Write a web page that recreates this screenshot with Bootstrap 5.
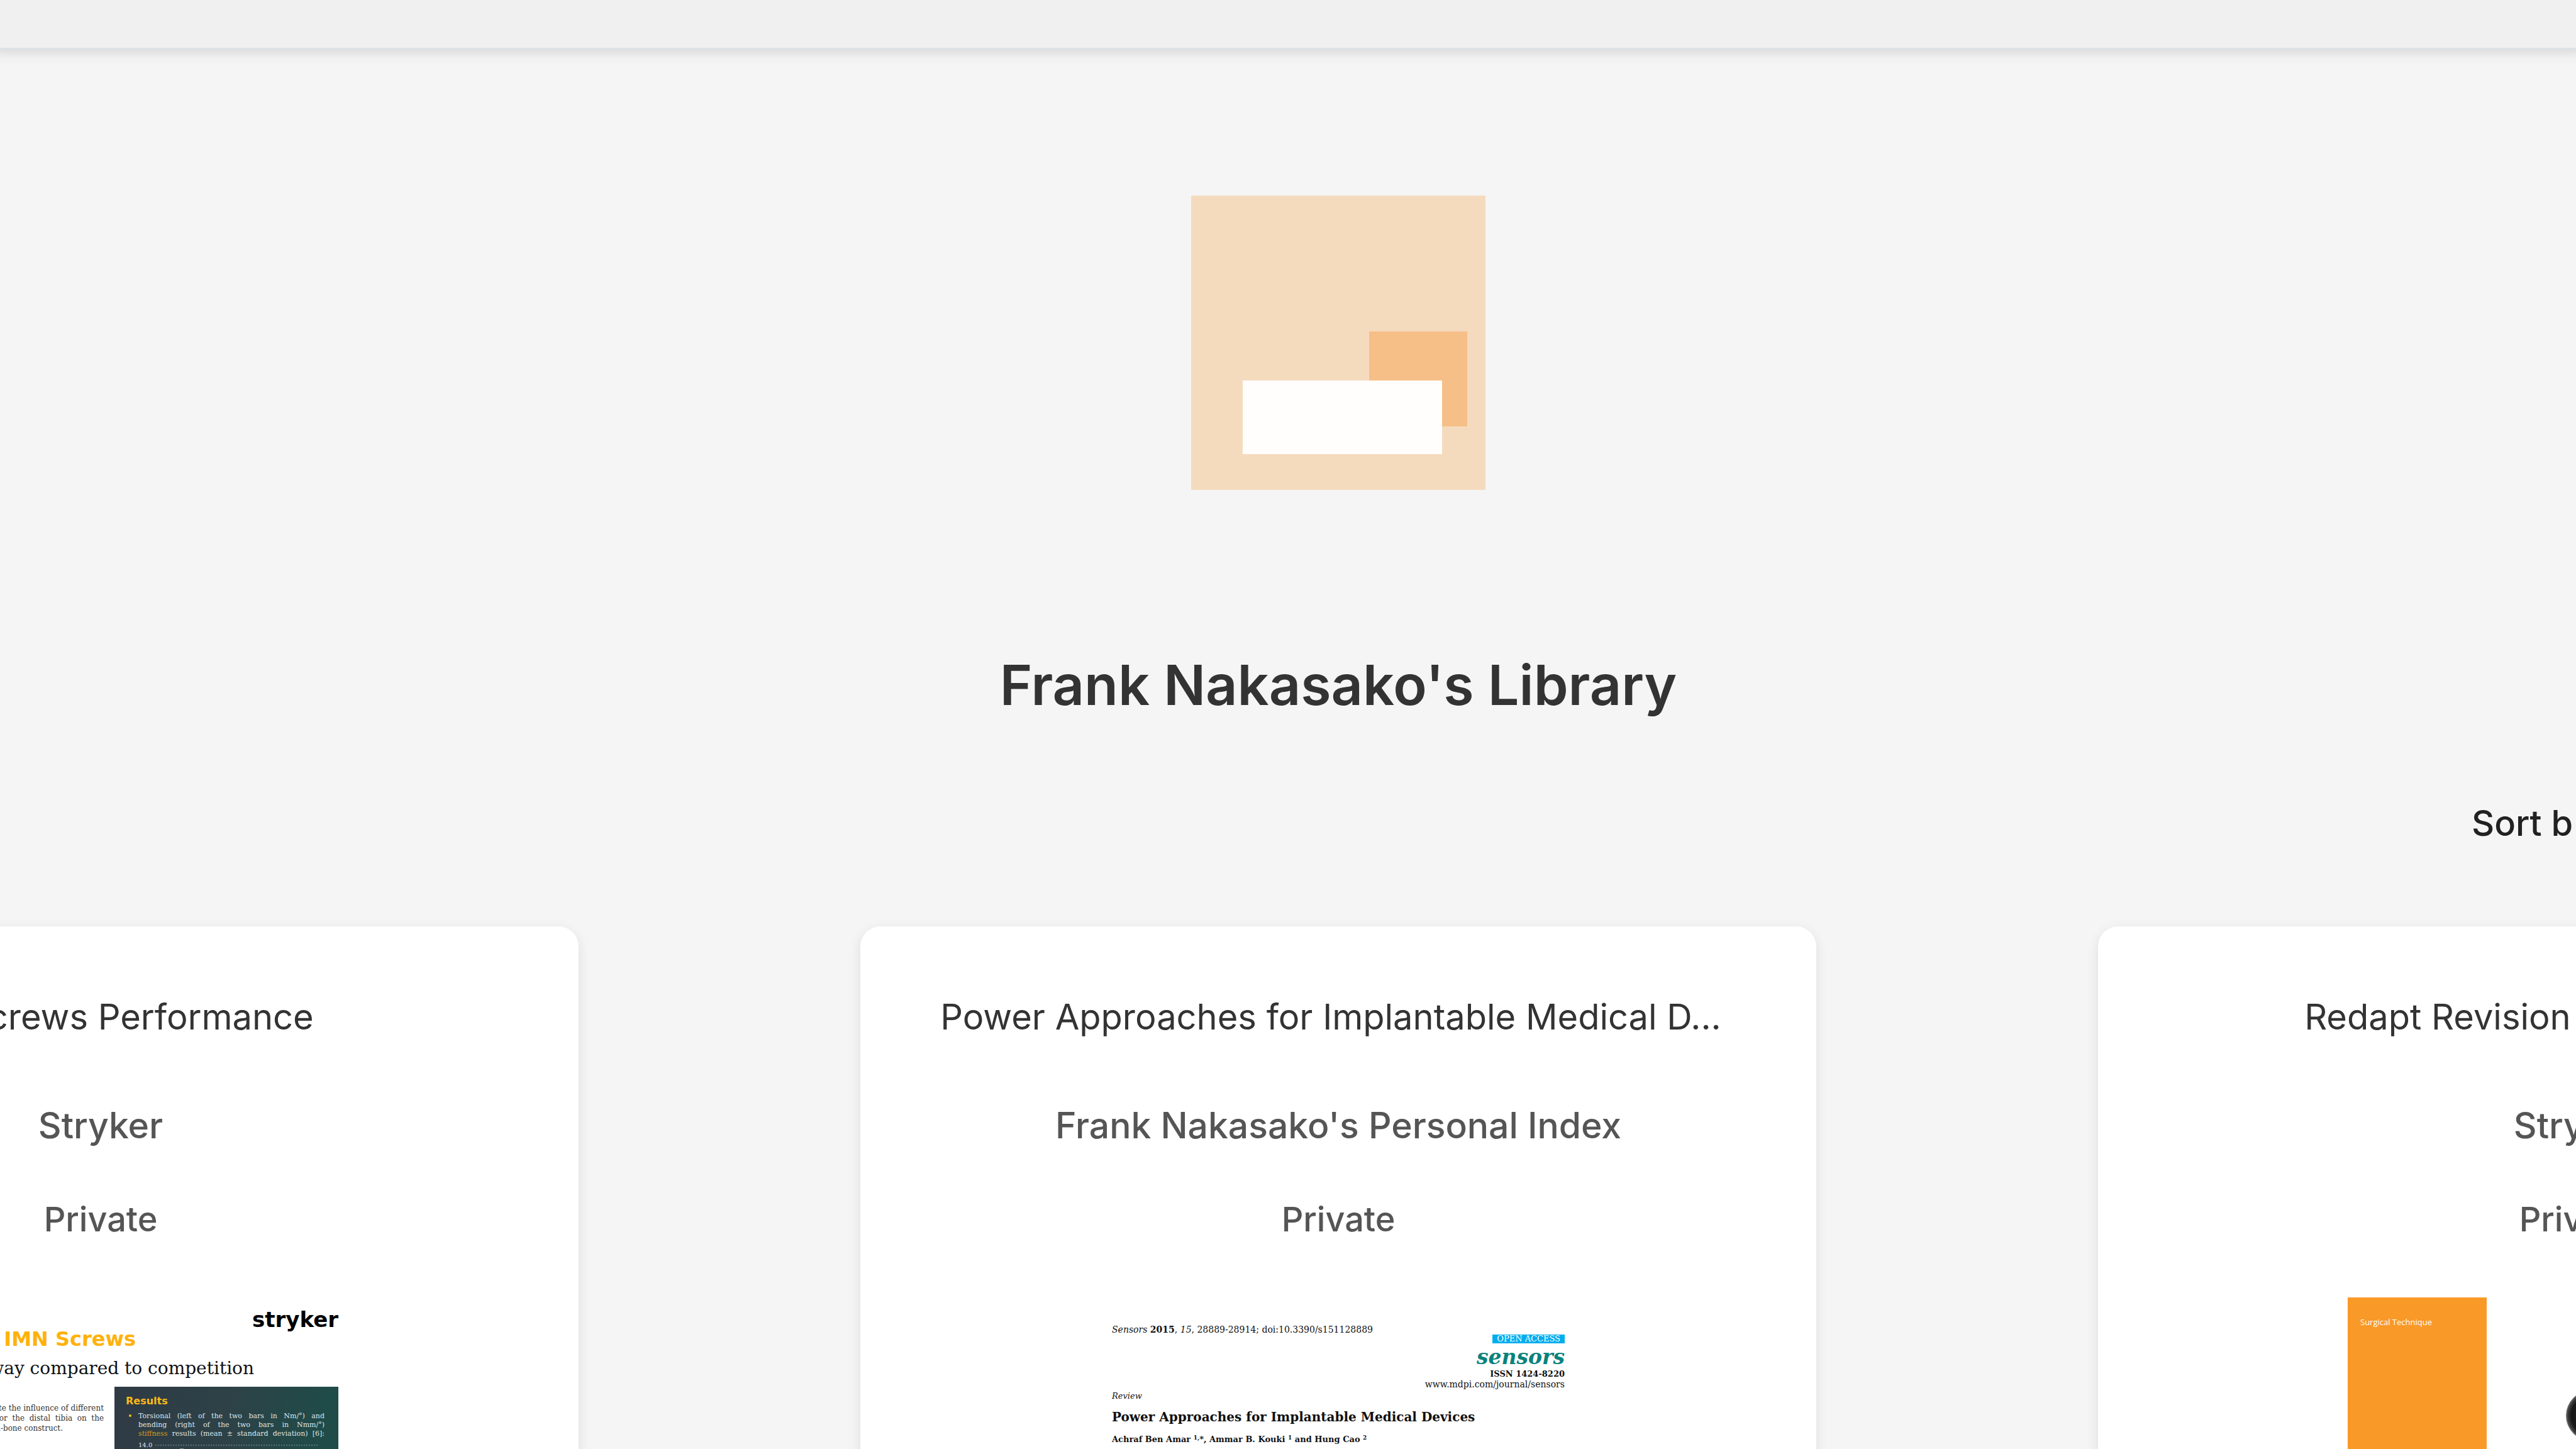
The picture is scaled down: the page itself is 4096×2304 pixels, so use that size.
<!DOCTYPE html>
<html lang="en">
<head>
<meta charset="utf-8">
<meta name="viewport" content="width=device-width, initial-scale=1">
<title>Frank Nakasako's Library</title>
<link href="https://cdn.jsdelivr.net/npm/bootstrap@5.3.0/dist/css/bootstrap.min.css" rel="stylesheet">
<style>
body { background: #f5f5f5; color: #333; font-family: Inter, "Liberation Sans", sans-serif; }
.top-bar { height: 78px; background: #f0f0f0; border-bottom: 2px solid #dde3e7; box-shadow: 0 -6px 18px 12px rgba(0,0,0,.12); }
.library { padding: 233px 0 0 160px; }
.logo { width: 468px; height: 468px; }
.library-title { margin: 254px 0 130px; font-size: 88px; line-height: 112px; font-weight: 600; }
.sort-bar { margin-bottom: 130px; }
.sort-label { flex: 0 0 166px; font-size: 56px; line-height: 68px; font-weight: 500; color: #212121; }
.shelf { gap: 448px; }
.doc { flex: 0 0 1520px; height: 1560px; padding-top: 110px; border: 0; border-radius: 32px; box-shadow: 0 6px 20px rgba(0,0,0,.1); }
.doc-title, .doc-index, .doc-access { color: #555; font-size: 57px; line-height: 68px; font-weight: 500; margin: 0; }
.doc-title { color: #333; font-size: 56px; font-weight: 400; margin-bottom: 105px; }
.doc-title.clipped { padding-right: 24px; }
.doc-index { margin-bottom: 83px; }
.doc-access { font-size: 54px; line-height: 64px; margin-bottom: 92px; }
.sheet { font-family: "DejaVu Serif", serif; color: #111; }
/* poster */
.poster { width: 756px; }
.poster-brand { font: 700 34px/34px "DejaVu Sans", sans-serif; color: #000; padding-top: 18px; }
.poster-head { width: 434px; font-size: 32px; line-height: 28px; }
.poster-head b { font-family: "DejaVu Sans", sans-serif; color: #ffb20a; }
.poster-sub { width: 622px; font-size: 28px; line-height: 32px; margin: 17px 0 13px; }
.poster-aim { width: 383px; font-size: 12px; line-height: 16px; padding-top: 26px; color: #333; }
.poster-aim .last-line { padding-right: 65px; }
.results { width: 356px; height: 400px; padding: 14px 22px 0 18px; color: #dfe6e8; font-size: 11px; line-height: 14px; background: linear-gradient(100deg, #2f3a45, #2d4247 45%, #1f4b48 80%); }
.results h3 { font: 700 16px/18px "DejaVu Sans", sans-serif; color: #fdb913; margin: 0 0 6px; }
.results ul { padding-left: 20px; margin: 0; }
.results li::marker { color: #fdb913; font-size: 14px; }
.results .spread { text-align: justify; text-align-last: justify; }
.results em { font-style: normal; color: #d99a1c; }
.results svg { width: 290px; height: 60px; margin-left: 20px; }
/* journal page */
.paper { width: 720px; padding-top: 44px; }
.paper-ref { font-size: 14px; line-height: 15px; }
.open-access { background: #00aeef; color: #fff; font-size: 13px; line-height: 14px; padding: 0 7px; }
.paper-name { font-size: 33px; line-height: 38px; color: #0a827c; margin-top: 3px; }
.paper-meta { font-size: 13px; line-height: 16px; }
.paper-meta.paper-url { font-size: 14px; }
.paper-kind { margin: 3px 0 13px; }
.paper-title { font-size: 20px; line-height: 24px; margin: 0 0 16px; font-weight: 700; }
.paper sup { font-size: 9px; }
/* brochure */
.brochure { width: 726px; }
.brochure-side { width: 221px; height: 600px; padding: 31px 20px; background: #f99928; color: #fff; font: 13px/16px "Open Sans", sans-serif; }
.brochure svg { width: 505px; height: 600px; }
</style>
<script src="https://cdn.jsdelivr.net/npm/bootstrap@5.3.0/dist/js/bootstrap.bundle.min.js"></script>
</head>
<body class="vh-100 overflow-hidden">
<header class="top-bar position-relative"></header>
<main class="library">
  <div class="text-center">
    <svg class="logo d-block mx-auto" viewBox="0 0 468 468" role="img" aria-label="Library logo">
      <rect width="468" height="468" fill="#f5dbbe"/>
      <rect x="283" y="216" width="156" height="151" fill="#f6bf88"/>
      <rect x="82" y="294" width="317" height="117" fill="#fffefc"/>
    </svg>
    <h1 class="library-title">Frank Nakasako's Library</h1>
  </div>
  <div class="sort-bar d-flex justify-content-end">
    <div class="sort-label text-nowrap">Sort b</div>
  </div>
  <div class="shelf d-flex justify-content-center">
    <article class="doc card align-items-center text-nowrap">
      <h2 class="doc-title">IMN Screws Performance</h2>
      <p class="doc-index">Stryker</p>
      <p class="doc-access">Private</p>
      <div class="sheet poster">
        <div class="poster-brand text-end">stryker</div>
        <div class="poster-head text-end">Study of <b>IMN Screws</b></div>
        <div class="poster-sub text-end">Pull-away compared to competition</div>
        <div class="d-flex justify-content-between">
          <div class="poster-aim text-end">
            <div>We aimed to evaluate the influence of different</div>
            <div>locking options for&nbsp; the&nbsp; distal&nbsp; tibia&nbsp; on&nbsp; the</div>
            <div class="last-line">stiffness of the nail-bone construct.</div>
          </div>
          <div class="results">
            <h3>Results</h3>
            <ul>
              <li>
                <div class="spread">Torsional (left of the two bars in Nm/°) and</div>
                <div class="spread">bending (right of the two bars in Nmm/°)</div>
                <div class="spread"><em>stiffness</em> results (mean ± standard deviation) [6]:</div>
              </li>
            </ul>
            <div class="d-flex">
              <svg viewBox="0 0 290 60" aria-hidden="true">
                <text x="0" y="14" font-size="10" fill="#dfe6e8">14.0</text>
                <path d="M27 11H286" stroke="#8fa0a3" stroke-dasharray="2 2"/>
                <path d="M66 17h6M69 17v20M195 18h6M198 18v20" stroke="#dfe6e8" fill="none"/>
              </svg>
            </div>
          </div>
        </div>
      </div>
    </article>
    <article class="doc card align-items-center text-nowrap">
      <h2 class="doc-title clipped">Power Approaches for Implantable Medical D...</h2>
      <p class="doc-index">Frank Nakasako's Personal Index</p>
      <p class="doc-access">Private</p>
      <div class="sheet paper">
        <div class="paper-ref"><i>Sensors</i> <b>2015</b>, <i>15</i>, 28889-28914; doi:10.3390/s151128889</div>
        <div class="d-flex flex-column align-items-end">
          <div class="open-access">OPEN ACCESS</div>
          <div class="paper-name fw-bold fst-italic">sensors</div>
          <div class="paper-meta fw-bold">ISSN 1424-8220</div>
          <div class="paper-meta paper-url">www.mdpi.com/journal/sensors</div>
        </div>
        <div class="paper-meta paper-kind fst-italic">Review</div>
        <h3 class="paper-title">Power Approaches for Implantable Medical Devices</h3>
        <div class="paper-meta fw-bold">Achraf Ben Amar <sup>1,</sup>*, Ammar B. Kouki <sup>1</sup> and Hung Cao <sup>2</sup></div>
      </div>
    </article>
    <article class="doc card align-items-center text-nowrap">
      <h2 class="doc-title">Redapt Revision Femoral System</h2>
      <p class="doc-index">Stryker</p>
      <p class="doc-access">Private</p>
      <div class="brochure d-flex">
        <div class="brochure-side">Surgical Technique</div>
        <svg viewBox="0 0 505 600" aria-hidden="true">
          <defs>
            <radialGradient id="ball" cx=".5" cy=".5" r=".5">
              <stop offset="0" stop-color="#222"/><stop offset=".78" stop-color="#161616"/>
              <stop offset=".92" stop-color="#3c3c3c"/><stop offset="1" stop-color="#777"/>
            </radialGradient>
          </defs>
          <circle cx="166" cy="188" r="40" fill="url(#ball)"/>
        </svg>
      </div>
    </article>
  </div>
</main>
</body>
</html>
